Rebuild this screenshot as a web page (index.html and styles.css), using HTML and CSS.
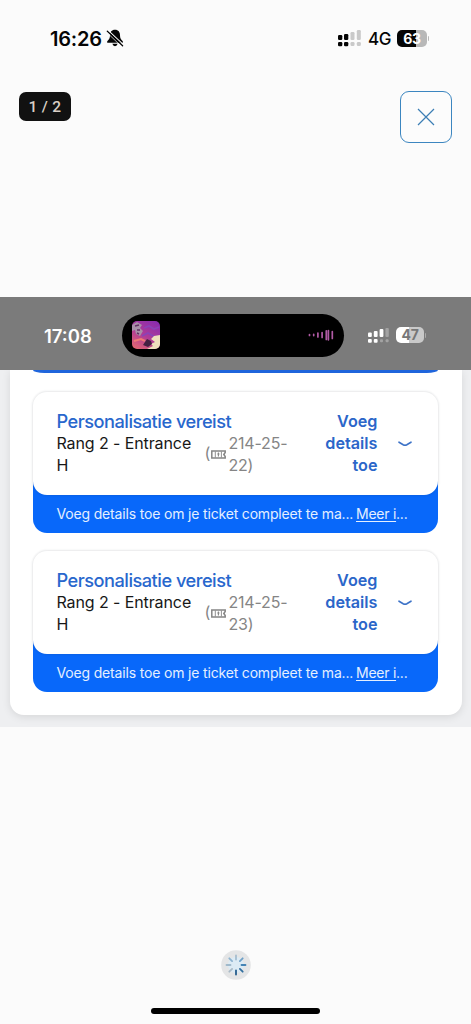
FILE: index.html
```html
<!DOCTYPE html>
<html lang="nl">
<head>
<meta charset="utf-8">
<meta name="viewport" content="width=device-width, initial-scale=1">
<title>Tickets</title>
<link rel="stylesheet" href="styles.css">
</head>
<body>
<svg class="defs" width="0" height="0" aria-hidden="true">
  <symbol id="ticket" viewBox="0 0 15 9">
    <path d="M.8 1H14.2V2.4L12.8 4.5 14.2 6.6V8H.8Z" fill="none" stroke="currentColor" stroke-width="1.5"/>
    <path d="M4.3 1.5V7.5M10.4 1.5V7.5" stroke="currentColor" stroke-width=".9"/>
    <path d="M7.4 2.6V6.4M6.3 4H8.5" stroke="currentColor" stroke-width="1.1"/>
  </symbol>
  <symbol id="chevron" viewBox="0 0 14 6"><path d="M1 1.2 5.2 3.7Q7 4.7 8.8 3.7L13 1.2" fill="none" stroke="currentColor" stroke-width="1.6" stroke-linecap="round"/></symbol>
</svg>
<div class="screen">
  <header class="status">
    <span class="clock">16:26</span>
    <svg class="bell" width="18" height="18" viewBox="0 0 18 18">
      <path d="M9 .8C5.6 .8 4 3.3 4 6.2 4 9.4 3 10.5 1.2 12.3V13.8H16.8V12.3C15 10.5 14 9.4 14 6.2 14 3.3 12.4 .8 9 .8ZM6.3 14.8H11.7Q11 17.2 9 17.2T6.3 14.8Z" fill="#050505"/>
      <path d="M2.4 1.6 17.4 15.6" stroke="#fbfbfb" stroke-width="1.1"/>
      <path d="M1.3 2.3 16.6 16.8" stroke="#050505" stroke-width="1.3" stroke-linecap="round"/>
      <path d="M.6 3.2 15.4 17.4" stroke="#fbfbfb" stroke-width=".7"/>
    </svg>
    <svg class="signal" width="24" height="17" viewBox="0 0 24 17">
      <g fill="#050505"><rect x="0" y="5" width="4.3" height="5" rx="1.2"/><rect x="6" y="4" width="4.3" height="6" rx="1.2"/><rect x="0" y="12" width="4.3" height="4.3" rx="1.2"/><rect x="6" y="12" width="4.3" height="4.3" rx="1.2"/></g>
      <g fill="#c9c9c9"><rect x="12.5" y="2" width="4" height="8" rx="1.2"/><rect x="18.8" y="0" width="4" height="10" rx="1.2"/><rect x="12.5" y="12" width="4" height="4" rx="1.2"/><rect x="18.8" y="12" width="4" height="4" rx="1.2"/></g>
    </svg>
    <span class="network">4G</span>
    <span class="battery">63</span>
  </header>
  <div class="toolbar">
    <span class="counter">1 / 2</span>
    <button class="close" aria-label="Sluiten"><svg width="18" height="18" viewBox="0 0 18 18"><path d="M1 1 17 17M17 1 1 17" stroke="#3c7eb5" stroke-width="1.2"/></svg></button>
  </div>
  <main class="photo">
    <div class="photo-status">
      <span class="photo-clock">17:08</span>
      <div class="island">
        <svg class="art" width="28" height="28" viewBox="0 0 28 28">
          <defs>
            <linearGradient id="art-bg" x1=".8" y1="0" x2=".2" y2="1"><stop offset="0" stop-color="#8a2cae"/><stop offset=".55" stop-color="#b13c96"/><stop offset="1" stop-color="#dd6474"/></linearGradient>
            <clipPath id="art-clip"><rect width="28" height="28" rx="5"/></clipPath>
          </defs>
          <g clip-path="url(#art-clip)">
            <rect width="28" height="28" fill="url(#art-bg)"/>
            <path d="M0 4 5 1 10 4 8 7 11 10 8 15 4 13 3 9 0 10Z" fill="#a98fa8"/>
            <path d="M3 5 7 4M5 9 8 9M5 12 7 13" stroke="#633064" stroke-width="1.5"/>
            <path d="M12 7 17 5 22 8 27 6M10 15 16 12 23 16" stroke="#8a42b8" stroke-width="1.6" fill="none"/>
            <path d="M28 14 22 15 19 18 23 21 19 23 21 25 15 28H28Z" fill="#eee0bd"/>
            <path d="M11 24 15 18 19 20 20 23 16 26Z" fill="#442042"/>
            <path d="M2 20 9 18 13 20" stroke="#ee7a75" stroke-width="2" fill="none"/>
          </g>
        </svg>
        <svg class="wave" width="26" height="12" viewBox="0 0 26 12"><path d="M1.5 5.5V6.5M5.7 5.4V6.6M9.9 4V8M14.1 3.5V8.5M18.3 1.8V10.5M20.4 1.5V10.8M24.3 2.5V9.5" stroke="#b05aa4" stroke-width="1.7" stroke-linecap="round"/></svg>
      </div>
      <svg class="photo-signal" width="22" height="15" viewBox="0 0 22 15">
        <g fill="#fff"><rect x="0" y="4.5" width="3.8" height="4.5" rx="1"/><rect x="5.8" y="3" width="3.8" height="6" rx="1"/><rect x="11.6" y="1" width="3.8" height="8" rx="1"/><rect x="0" y="11" width="3.8" height="3.8" rx="1"/><rect x="5.8" y="11" width="3.8" height="3.8" rx="1"/></g>
        <g fill="#a3a3a3"><rect x="17.4" y="0" width="3.4" height="9" rx="1"/><rect x="12" y="11.3" width="3" height="3" rx="1"/><rect x="17.6" y="11.3" width="3" height="3" rx="1"/></g>
      </svg>
      <span class="battery battery-light">47</span>
    </div>
    <div class="photo-body">
      <div class="panel">
        <div class="previous"></div>
        <article class="ticket">
          <div class="ticket-top">
            <div class="info">
              <h2>Personalisatie vereist</h2>
              <div class="seat">
                <span class="place">Rang 2 - Entrance H</span>
                <span class="paren">(</span><svg class="ticket-icon" width="15" height="9"><use href="#ticket"/></svg>
                <span class="number">214-25-<br>22)</span>
              </div>
            </div>
            <div class="action">Voeg<br>details<br>toe</div>
            <svg class="chevron" width="14" height="6"><use href="#chevron"/></svg>
          </div>
          <div class="notice"><span class="message">Voeg details toe om je ticket compleet te ma...</span><span class="more"><u>Meer i</u>...</span></div>
        </article>
        <article class="ticket">
          <div class="ticket-top">
            <div class="info">
              <h2>Personalisatie vereist</h2>
              <div class="seat">
                <span class="place">Rang 2 - Entrance H</span>
                <span class="paren">(</span><svg class="ticket-icon" width="15" height="9"><use href="#ticket"/></svg>
                <span class="number">214-25-<br>23)</span>
              </div>
            </div>
            <div class="action">Voeg<br>details<br>toe</div>
            <svg class="chevron" width="14" height="6"><use href="#chevron"/></svg>
          </div>
          <div class="notice"><span class="message">Voeg details toe om je ticket compleet te ma...</span><span class="more"><u>Meer i</u>...</span></div>
        </article>
      </div>
    </div>
  </main>
  <footer class="footer">
    <svg class="spinner" width="30" height="30" viewBox="0 0 30 30">
      <circle cx="15" cy="15" r="14.8" fill="#e4e5e6"/>
      <circle cx="15" cy="15" r="8" fill="#dcebf5"/>
      <g stroke-width="1.8" stroke-linecap="round">
        <path d="M15 5.5V9.5" stroke="#a5bdcf"/>
        <path d="M21.7 8.3 18.9 11.1" stroke="#6fa0c7"/>
        <path d="M20.5 15H24.5" stroke="#4583b4"/>
        <path d="M18.9 18.9 21.7 21.7" stroke="#326f9f"/>
        <path d="M15 20.5V24.5" stroke="#245d8d"/>
        <path d="M11.1 18.9 8.3 21.7" stroke="#a9bac7"/>
        <path d="M5.5 15H9.5" stroke="#a0b9cb"/>
        <path d="M8.3 8.3 11.1 11.1" stroke="#8db3d0"/>
      </g>
    </svg>
    <div class="home"></div>
  </footer>
</div>
</body>
</html>
```
FILE: styles.css
```css
* { box-sizing: border-box; }
body { margin: 0; background: #fbfbfb; font-family: Inter, "Liberation Sans", sans-serif; }
svg { display: block; flex: none; }
.defs { position: absolute; }
.screen { height: 1024px; display: flex; flex-direction: column; overflow: hidden; }

.status { height: 76px; padding: 0 44px 0 50px; display: flex; align-items: center; color: #050505; }
.clock { padding-top: 1px; font-size: 20px; font-weight: 600; line-height: 24px; letter-spacing: -0.2px; width: 56px; white-space: nowrap; }
.signal { margin-left: auto; }
.network { margin-left: 6px; padding-top: 2px; width: 29px; font-size: 17px; font-weight: 500; letter-spacing: -0.4px; }
.battery { position: relative; width: 30px; height: 17px; border-radius: 5px; background: linear-gradient(90deg, #050505 63%, #b8b8b8 63%); color: #fff; font-size: 14px; line-height: 17px; font-weight: 700; text-align: center; letter-spacing: -0.3px; }
.battery::after { content: ""; position: absolute; left: 30.5px; top: 6px; width: 1.5px; height: 5px; border-radius: 0 2px 2px 0; background: #b8b8b8; }

.toolbar { height: 221px; padding: 15px 19px 0; display: flex; justify-content: space-between; align-items: flex-start; }
.counter { margin-top: 1px; width: 52px; height: 29px; border-radius: 7px; background: #111; color: #d9cfc6; font: 500 15.5px/30px Roboto, sans-serif; text-align: center; letter-spacing: 0.3px; }
.close { width: 52px; height: 52px; padding: 0; display: grid; place-items: center; border: 1.4px solid #3c86c0; border-radius: 9px; background: #fcfcfc; }

.photo { height: 430px; flex: none; }
.photo-status { height: 73px; padding: 0 47px 0 44px; display: flex; align-items: center; background: #7b7b7b; }
.photo-clock { width: 78px; padding-top: 4px; color: #fff; font-size: 18.5px; line-height: 24px; font-weight: 600; }
.island { width: 222px; height: 43px; margin-top: 3px; padding: 0 10px; display: flex; align-items: center; justify-content: space-between; border-radius: 22px; background: #000; }
.photo-signal { margin: 3px 0 0 24px; }
.battery-light { margin: 3px 0 0 auto; width: 28px; height: 16px; line-height: 16px; background: linear-gradient(90deg, #fff 47%, #c9c9c9 47%); color: #777; }
.battery-light::after { left: 28.5px; background: #aaa; }

.photo-body { height: 357px; padding: 0 9.5px 11.5px; overflow: hidden; background: #eeeff1; }
.panel { height: 345px; padding: 0 23.5px 0 23px; border-radius: 0 0 14px 14px; background: #fff; box-shadow: 0 2px 9px rgba(0, 0, 0, 0.1); }
.previous { height: 3.2px; margin-bottom: 18.4px; background: #1f65dc; border-radius: 0 0 12px 12px / 0 0 3.2px 3.2px; }
.ticket { height: 141px; margin-bottom: 18.1px; border-radius: 14px; background: linear-gradient(transparent 60%, #0868fa 60%); }
.ticket-top { height: 103.6px; padding: 18.6px 0 0 24px; display: flex; border-radius: 14px; background: #fff; box-shadow: 0 0 2px 1px rgba(30, 35, 45, 0.1); }
.info { width: 260px; }
h2 { margin: 0; color: #2867cd; font-size: 18.2px; line-height: 22px; font-weight: 500; letter-spacing: -0.5px; white-space: nowrap; }
.seat { margin-top: 1px; display: flex; font-size: 16px; line-height: 21.5px; letter-spacing: -0.1px; color: #171717; }
.place { width: 148px; padding-right: 10px; }
.paren { width: 6px; padding-top: 10px; color: #858585; }
.ticket-icon { margin: 17px 3px 0 0; color: #858585; }
.number { color: #858585; white-space: nowrap; letter-spacing: -0.2px; }
.action { width: 61px; color: #2b66c9; font-size: 16.2px; line-height: 22px; font-weight: 600; letter-spacing: 0; text-align: right; }
.chevron { margin: 31px 0 0 20.5px; color: #3c72c7; }
.notice { height: 37px; padding: 1px 30px 0 24px; display: flex; gap: 2.5px; color: #e4efff; font-size: 14px; line-height: 36px; letter-spacing: -0.17px; white-space: nowrap; }
.message { width: 297px; }
.more { letter-spacing: -0.25px; }
.more u { text-underline-offset: 2px; }

.footer { flex: 1; padding: 223px 0 0; display: flex; flex-direction: column; align-items: center; gap: 28px; }
.home { width: 169px; height: 6px; border-radius: 3px; background: #000; }
```
